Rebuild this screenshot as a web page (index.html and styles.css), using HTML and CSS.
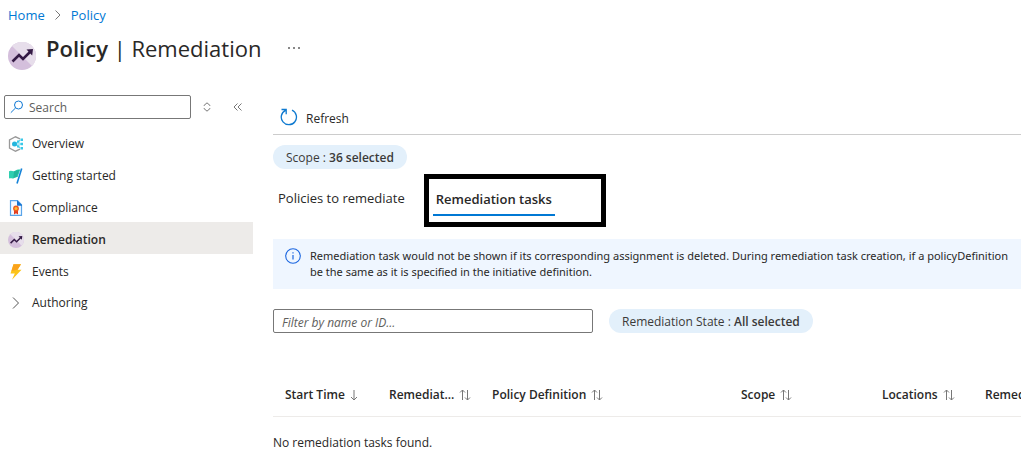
FILE: index.html
```html
<!DOCTYPE html>
<html lang="en">
<head>
<meta charset="utf-8">
<title>Policy | Remediation</title>
<link rel="stylesheet" href="styles.css">
</head>
<body>
<svg class="defs" aria-hidden="true">
  <defs>
    <symbol id="policy" viewBox="0 0 28 28">
      <circle cx="14" cy="14" r="14" fill="#d4bfdc"/>
      <path d="M4 4A14 14 0 0 1 28 14A14 14 0 0 1 24 24Z" fill="#e7deeb"/>
      <path d="M4.500 19.500L11 13l4 4 7-7" fill="none" stroke="#341a45" stroke-width="2.600"/>
      <path d="M18.500 7.500L25 7l-.8 6.500z" fill="#341a45"/>
    </symbol>
    <symbol id="sort" viewBox="0 0 12 12">
      <path d="M3.500 11V1M1 3.500L3.500 1 6 3.500M8.500 1v10M6 8.500L8.500 11 11 8.500" fill="none" stroke="#777"/>
    </symbol>
  </defs>
</svg>
<header class="header">
  <nav class="breadcrumb" aria-label="Breadcrumb">
    <a href="#">Home</a>
    <svg width="6" height="10" viewBox="0 0 6 10"><path d="M.5.5L5 5 .5 9.500" fill="none" stroke="#777"/></svg>
    <a href="#">Policy</a>
  </nav>
  <div class="heading">
    <svg class="heading-icon" width="28" height="28"><use href="#policy"/></svg>
    <h1 class="title"><strong>Policy</strong> | Remediation</h1>
    <button class="icon-button more" aria-label="More">
      <svg width="12" height="2" viewBox="0 0 12 2" fill="#888"><path d="M0 0h2v2H0zM5 0h2v2H5zM10 0h2v2h-2z"/></svg>
    </button>
  </div>
</header>
<div class="layout">
  <aside class="sidebar">
    <div class="search-row">
      <label class="search">
        <svg width="14" height="14" viewBox="0 0 14 14" fill="none" stroke="#0f78d4"><circle cx="8.500" cy="5" r="4"/><path d="M5.500 8L.8 12.700"/></svg>
        <input class="search-input" type="search" placeholder="Search" aria-label="Search">
      </label>
      <button class="icon-button" aria-label="Sort menu">
        <svg width="8" height="10" viewBox="0 0 8 10" fill="none" stroke="#777"><path d="M1 4V3.500L4 .8l3 2.700V4M1 6v.5l3 2.700 3-2.700V6"/></svg>
      </button>
      <button class="icon-button collapse" aria-label="Collapse menu">
        <svg width="9" height="8" viewBox="0 0 9 8" fill="none" stroke="#777"><path d="M4.500.5L1 4l3.500 3.500M8.500.5L5 4l3.500 3.500"/></svg>
      </button>
    </div>
    <nav class="menu" aria-label="Policy menu">
      <a class="menu-item" href="#">
        <svg width="16" height="16" viewBox="0 0 16 16"><path d="M12 2.800L7.500.8 1.500 4v8l6 3.200L12 13.200" fill="none" stroke="#999" stroke-width="1.300"/><path d="M7 8l5-4M7 8h6M7 8l5 4" stroke="#5ad4ec"/><circle cx="6.500" cy="8" r="2.500" fill="#22b5dd"/><path d="M9 4.500h2.500v2.300H9zM12.500 2.500H15V5h-2.500zM12.500 6.800H15v2.400h-2.500zM9 9.200h2.500v2.300H9zM12.500 11H15v2.500h-2.500z" fill="#38c8e8"/></svg>
        Overview
      </a>
      <a class="menu-item" href="#">
        <svg width="16" height="16" viewBox="0 0 16 16"><path d="M1 3.300c2.500-1.800 4 1.200 6.500-.7C9 1.400 10.500 1.400 12.300 1.600L9.600 9.200c-1.800-.4-2.800.8-4.200 1.200-1.600.4-2.600-.6-4.400.2z" fill="#2fcfb0"/><path d="M6 3.400l5.400-1.600L8.800 9 5.400 10z" fill="#22b69c"/><path d="M13.700.5L9 15.500" stroke="#1683d8" stroke-width="1.600"/></svg>
        Getting started
      </a>
      <a class="menu-item" href="#">
        <svg width="16" height="16" viewBox="0 0 16 16"><path d="M2.500.7h7l4 4v10.600h-11z" fill="#f5faff" stroke="#5aa5ea" stroke-width="1.200"/><path d="M9 .2L14 5v.7H9z" fill="#1774d1"/><path d="M6 10h4v4.500l-2-1.300-2 1.300z" fill="#e03c22"/><circle cx="8" cy="8.500" r="2.900" fill="#ed5b1e"/><circle cx="8" cy="8.500" r="1.500" fill="#ffbd2e"/></svg>
        Compliance
      </a>
      <a class="menu-item selected" href="#" aria-current="page">
        <svg width="16" height="16"><use href="#policy"/></svg>
        Remediation
      </a>
      <a class="menu-item" href="#">
        <svg width="16" height="16" viewBox="0 0 16 16"><path d="M5.500.3H13L9.500 5.700h4L4 15.800l2.800-6.400H2.500z" fill="#fcc419"/><path d="M5.500.3H13L9.500 5.700 3.500 7z" fill="#faa21b"/></svg>
        Events
      </a>
      <a class="menu-item group" href="#">
        <svg width="16" height="16" viewBox="0 0 16 16"><path d="M5 2.500L10.500 8 5 13.500" fill="none" stroke="#555"/></svg>
        Authoring
      </a>
    </nav>
  </aside>
  <main class="content">
    <div class="toolbar">
      <button class="refresh">
        <svg width="18" height="18" viewBox="0 0 18 18" fill="none" stroke="#0f7ad0" stroke-width="1.300"><path d="M5.500 2.300A7.600 7.600 0 1 0 12 2.200M1.500 1.500h4.700v4.700"/></svg>
        <span class="refresh-label">Refresh</span>
      </button>
    </div>
    <button class="pill">Scope : <b>36 selected</b></button>
    <div class="tabs" role="tablist">
      <button class="tab" role="tab" aria-selected="false">Policies to remediate</button>
      <div class="tab-callout">
        <button class="tab active" role="tab" aria-selected="true">Remediation tasks</button>
      </div>
    </div>
    <div class="notice">
      <svg class="notice-icon" width="16" height="16" viewBox="0 0 16 16"><circle cx="8" cy="8" r="7.300" fill="none" stroke="#1b66e0" stroke-width="1.100"/><path d="M8 7v4.500M8 4.200v1.300" stroke="#1b66e0" stroke-width="1.200"/></svg>
      <p class="notice-text">Remediation task would not be shown if its corresponding assignment is deleted. During remediation task creation, if a policyDefinition<br>be the same as it is specified in the initiative definition.</p>
    </div>
    <div class="filters">
      <input class="filter-input" type="text" placeholder="Filter by name or ID..." aria-label="Filter by name or ID">
      <button class="pill">Remediation State : <b>All selected</b></button>
    </div>
    <table class="tasks">
      <colgroup><col class="col-time"><col class="col-small"><col class="col-policy"><col class="col-scope"><col class="col-small"><col></colgroup>
      <thead>
        <tr>
          <th scope="col">Start Time <svg width="8" height="12" viewBox="0 0 8 12"><path d="M4 1v10M1 8l3 3 3-3" fill="none" stroke="#777"/></svg></th>
          <th scope="col">Remediat... <svg width="12" height="12"><use href="#sort"/></svg></th>
          <th scope="col">Policy Definition <svg width="12" height="12"><use href="#sort"/></svg></th>
          <th scope="col">Scope <svg width="12" height="12"><use href="#sort"/></svg></th>
          <th scope="col">Locations <svg width="12" height="12"><use href="#sort"/></svg></th>
          <th scope="col">Remediation</th>
        </tr>
      </thead>
      <tbody>
        <tr><td colspan="6">No remediation tasks found.</td></tr>
      </tbody>
    </table>
  </main>
</div>
</body>
</html>
```
FILE: styles.css
```css
* {
  box-sizing: border-box;
}

body {
  margin: 0;
  overflow-x: hidden;
  background: #fff;
  color: #292827;
  font: 12px/16px "Open Sans", "Noto Sans", sans-serif;
}

button,
input {
  font: inherit;
  color: inherit;
}

button {
  padding: 0;
  border: 0;
  background: none;
  white-space: nowrap;
}

a {
  color: inherit;
  text-decoration: none;
}

b,
strong {
  font-weight: 600;
}

svg {
  flex: none;
}

.defs {
  position: absolute;
  width: 0;
  height: 0;
}

.header {
  padding: 7px 8px 0;
}

.breadcrumb {
  display: flex;
  align-items: center;
  gap: 10px;
  font-size: 13px;
  color: #0078d4;
}

.breadcrumb a {
  font-size: 13px;
}

.heading {
  display: flex;
  align-items: center;
  gap: 10px;
  height: 50px;
}

.heading-icon {
  margin-top: 16px;
}

.title {
  margin: 0;
  font-size: 22px;
  line-height: 32px;
  font-weight: 400;
}

.icon-button {
  display: flex;
  align-items: center;
  justify-content: center;
  width: 16px;
  height: 16px;
}

.more {
  margin-left: 15px;
}

.layout {
  display: flex;
  gap: 20px;
  padding-top: 22px;
}

.sidebar {
  flex: 0 0 253px;
}

.search-row {
  display: flex;
  align-items: center;
  padding-left: 4px;
  gap: 8px;
}

.search {
  display: flex;
  align-items: center;
  gap: 5px;
  width: 187px;
  height: 24px;
  padding: 0 5px;
  border: 1px solid #777;
  border-radius: 2px;
}

.search-input {
  flex: 1;
  min-width: 0;
  padding: 2px 0 0;
  border: 0;
  background: none;
}

input::placeholder {
  color: #605e5c;
  opacity: 1;
}

.collapse {
  margin-left: 6px;
}

.menu {
  padding-top: 7px;
}

.menu-item {
  display: flex;
  align-items: center;
  gap: 8px;
  height: 32px;
  padding: 3px 8px 0;
}

.selected {
  background: #edebe9;
  font-weight: 600;
}

.group {
  height: 30px;
}

.content {
  flex: 1;
  min-width: 0;
  overflow: hidden;
}

.toolbar {
  height: 40px;
  margin-bottom: 10px;
  padding: 12px 7px 0;
  border-bottom: 1px solid #ccc;
}

.refresh {
  display: flex;
  align-items: center;
  gap: 8px;
}

.refresh-label {
  padding-top: 4px;
}

.pill {
  display: block;
  height: 24px;
  padding: 2px 13px 0;
  border-radius: 12px;
  background: #e3f0fb;
  color: #3b3a39;
}

.tabs {
  display: flex;
  gap: 19px;
  padding: 5px 0 0 5px;
  font-size: 13px;
}

.tab {
  height: 47px;
}

.tab-callout {
  width: 182px;
  height: 53px;
  padding: 5px 4px 0;
  border: 5px solid #000;
}

.active {
  height: 32px;
  padding: 0 3px;
  border-bottom: 2px solid #0078d4;
  font-weight: 600;
}

.notice {
  display: flex;
  gap: 9px;
  height: 50px;
  margin-top: 12px;
  padding: 9px 12px;
  background: #eff6ff;
}

.notice-text {
  margin: 0;
  font-family: "Noto Sans", "Open Sans", sans-serif;
  font-size: 11px;
  white-space: nowrap;
}

.filters {
  display: flex;
  gap: 16px;
  margin-top: 20px;
}

.filter-input {
  width: 320px;
  height: 24px;
  padding: 2px 8px 0;
  border: 1px solid #777;
  border-radius: 2px;
}

.filter-input::placeholder {
  font-style: italic;
}

.tasks {
  width: 100%;
  margin-top: 40px;
  border-collapse: collapse;
  table-layout: fixed;
}

.col-time {
  width: 104px;
}

.col-small {
  width: 103px;
}

.col-policy {
  width: 249px;
}

.col-scope {
  width: 141px;
}

.tasks th {
  height: 43px;
  padding: 1px 0 0 12px;
  border-bottom: 1px solid #edebe9;
  overflow: hidden;
  font-weight: 600;
  text-align: left;
  white-space: nowrap;
}

.tasks th svg {
  margin-left: 2px;
  vertical-align: -2px;
}

.tasks td {
  padding: 18px 0 0;
}
```
